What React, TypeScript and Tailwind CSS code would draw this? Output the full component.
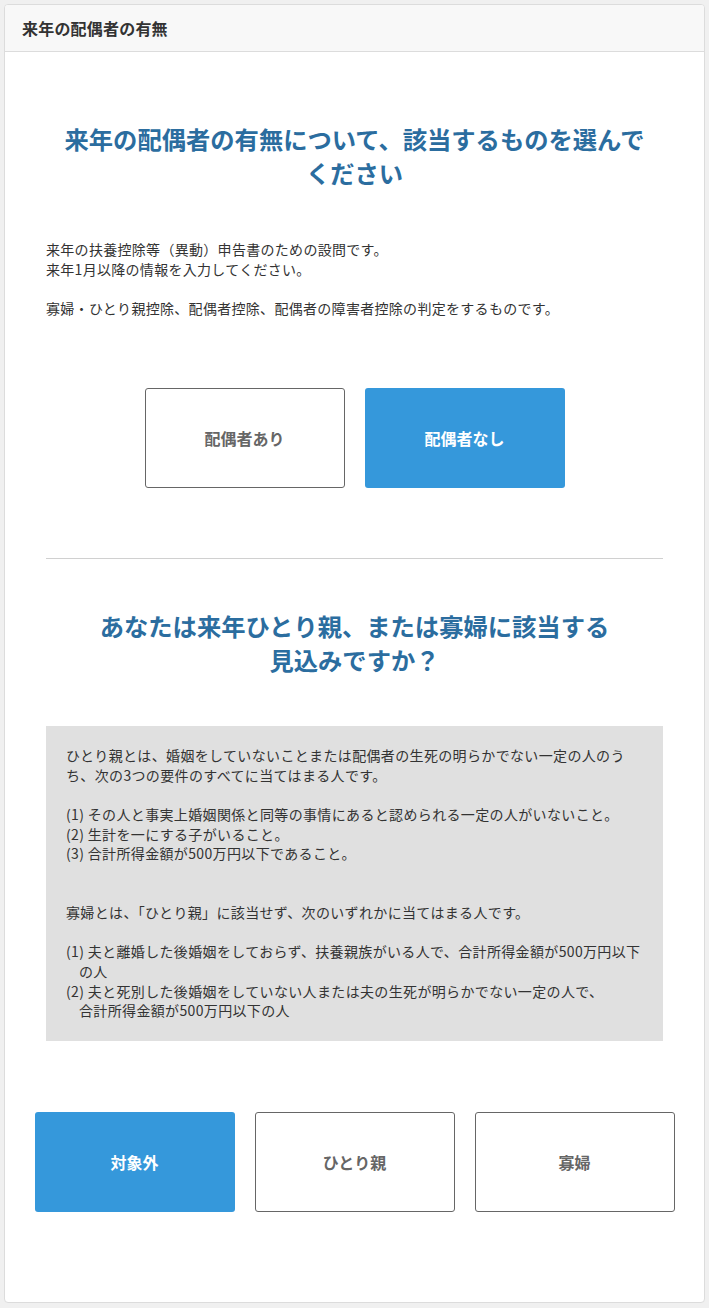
import React from 'react'

const jp = { fontFamily: '"Noto Sans CJK JP", "Noto Sans", sans-serif' }

interface ChoiceProps {
  label: string
  selected?: boolean
}

function Choice({ label, selected }: ChoiceProps) {
  return (
    <button
      className={
        selected
          ? 'w-[200px] h-[100px] shrink-0 rounded-[3px] bg-[#3598db] text-white text-[16px] font-bold'
          : 'w-[200px] h-[100px] shrink-0 rounded-[3px] border border-[#666] bg-white text-[#666] text-[16px] font-bold'
      }
    >
      {label}
    </button>
  )
}

export default function App() {
  return (
    <div className="min-h-[1308px] bg-[#f0f0f0] p-1 pb-[5px]" style={jp}>
      <div className="rounded-[4px] border border-[#dcdcdc] bg-white overflow-hidden">
        <div className="h-[47px] flex items-center px-[17px] bg-[#f8f8f8] border-b border-[#dcdcdc]">
          <span className="text-[16px] font-bold text-[#333] tracking-[0.2px]">来年の配偶者の有無</span>
        </div>

        <div className="px-[41px] pt-[70px] pb-[90px] text-[#333]">
          <h2 className="text-center text-[24.3px] leading-[34px] font-bold text-[#2b6d9f]">
            来年の配偶者の有無について、該当するものを選んで
            <br />
            ください
          </h2>

          <p className="mt-[50px] text-[14px] leading-[1.4] tracking-[0.3px]">
            来年の扶養控除等（異動）申告書のための設問です。
            <br />
            来年1月以降の情報を入力してください。
            <br />
            <br />
            寡婦・ひとり親控除、配偶者控除、配偶者の障害者控除の判定をするものです。
          </p>

          <div className="mt-[70px] flex justify-center gap-5">
            <Choice label="配偶者あり" />
            <Choice label="配偶者なし" selected />
          </div>

          <hr className="mt-[70px] border-t border-[#d0d0d0]" />

          <h2 className="mt-[50px] text-center text-[24.3px] leading-[34px] font-bold text-[#2b6d9f]">
            あなたは来年ひとり親、または寡婦に該当する
            <br />
            見込みですか？
          </h2>

          <div className="mt-[49px] bg-[#e0e0e0] p-5 text-[14px] leading-[1.4] tracking-[0.35px]">
            ひとり親とは、婚姻をしていないことまたは配偶者の生死の明らかでない一定の人のう
            <br />
            ち、次の3つの要件のすべてに当てはまる人です。
            <br />
            <br />
            (1) その人と事実上婚姻関係と同等の事情にあると認められる一定の人がいないこと。
            <br />
            (2) 生計を一にする子がいること。
            <br />
            (3) 合計所得金額が500万円以下であること。
            <br />
            <br />
            <br />
            寡婦とは、「ひとり親」に該当せず、次のいずれかに当てはまる人です。
            <br />
            <br />
            (1) 夫と離婚した後婚姻をしておらず、扶養親族がいる人で、合計所得金額が500万円以下
            <br />
            <span className="pl-[13px]">の人</span>
            <br />
            (2) 夫と死別した後婚姻をしていない人または夫の生死が明らかでない一定の人で、
            <br />
            <span className="pl-[13px]">合計所得金額が500万円以下の人</span>
          </div>

          <div className="mt-[71px] flex justify-center gap-5">
            <Choice label="対象外" selected />
            <Choice label="ひとり親" />
            <Choice label="寡婦" />
          </div>
        </div>
      </div>
    </div>
  )
}
